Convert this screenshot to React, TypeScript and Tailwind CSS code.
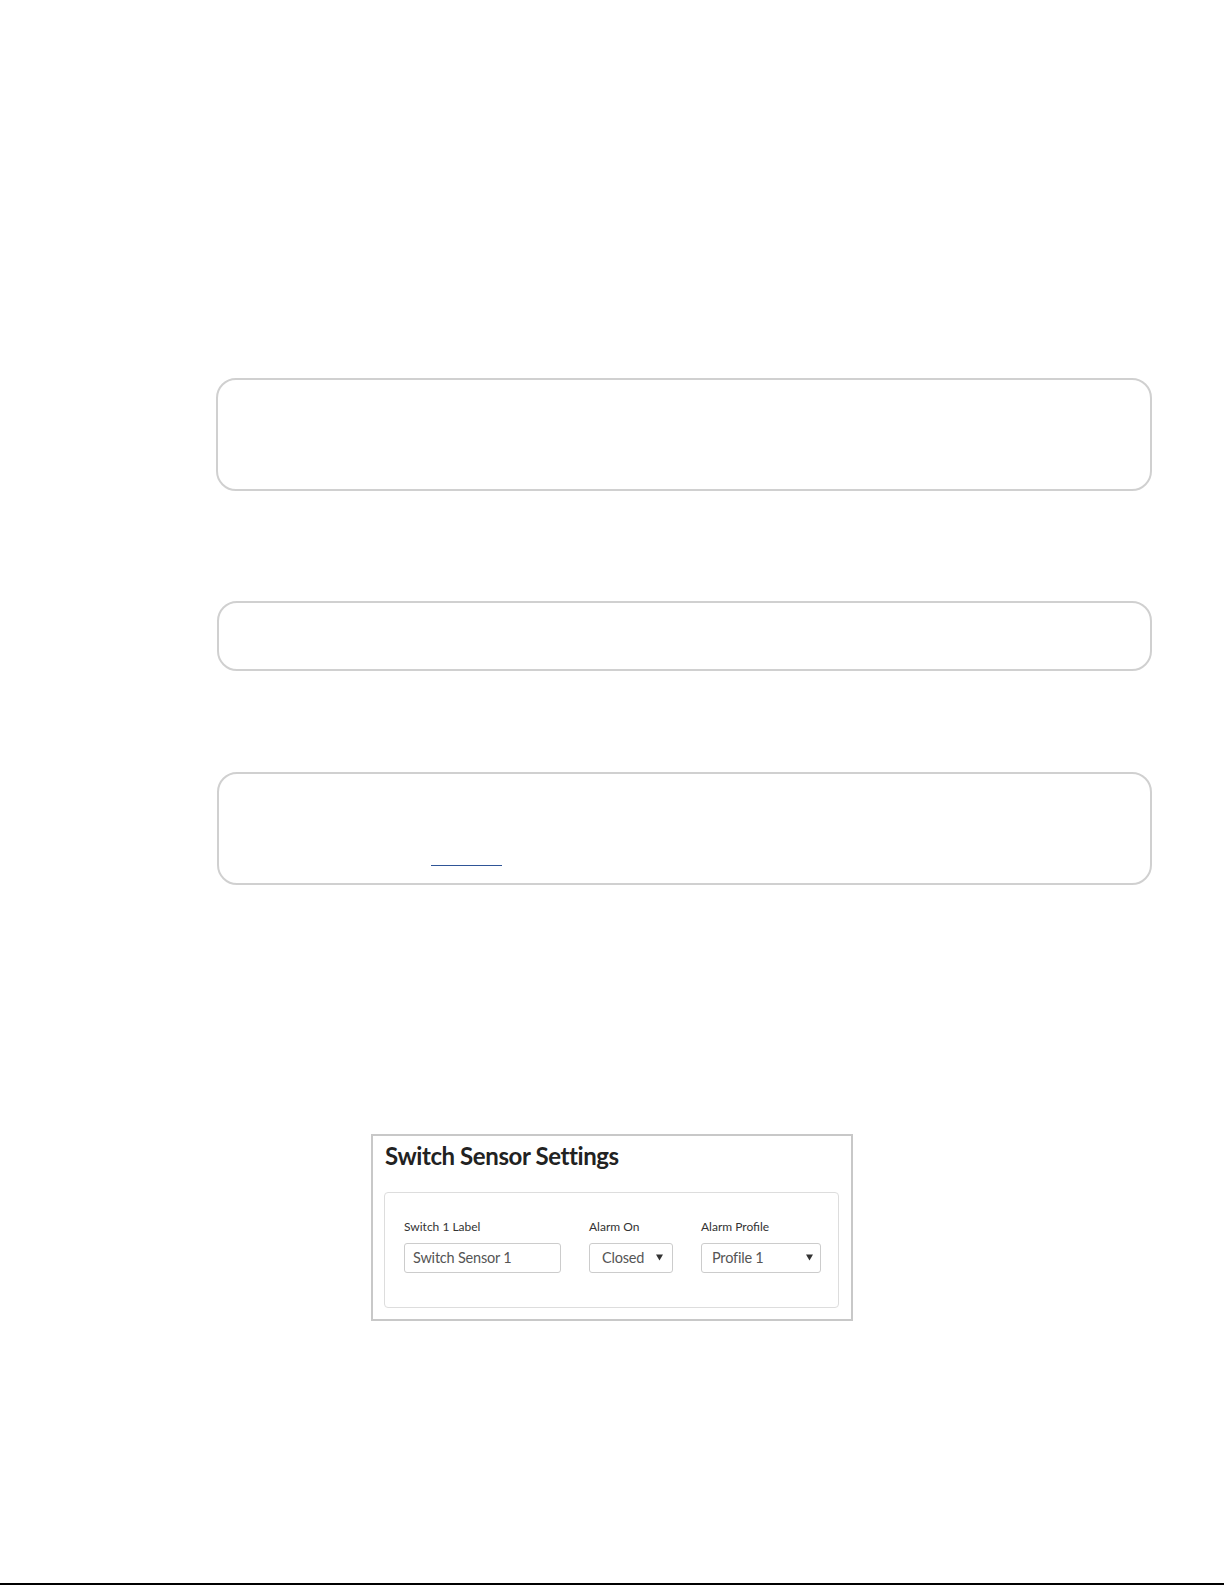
import React from "react";

function Field({
  label,
  width,
  text,
  textPad,
  select,
  arrowRight,
}: {
  label: string;
  width: string;
  text: string;
  textPad: string;
  select?: boolean;
  arrowRight?: string;
}) {
  return (
    <div className="flex flex-col">
      <div className="h-[16px] mb-[8px] text-[12px] leading-[16px] text-[#333333]">{label}</div>
      <div
        className={`relative h-[30px] ${width} border border-[#cccccc] rounded-[3px] bg-white flex items-center`}
      >
        <span className={`${textPad} text-[14.5px] leading-[20px] tracking-[-0.2px] text-[#555555]`}>
          {text}
        </span>
        {select && (
          <svg
            className={`absolute ${arrowRight} top-[10px]`}
            width="7"
            height="7"
            viewBox="0 0 7 7"
          >
            <path d="M0 0.5 H7 L3.5 6.5 Z" fill="#333333" />
          </svg>
        )}
      </div>
    </div>
  );
}

export default function App() {
  return (
    <div
      className="w-[1225px] h-[1585px] bg-white flex flex-col"
      style={{ fontFamily: 'Lato, "Noto Sans", Arial, sans-serif' }}
    >
      <div className="pt-[378px] flex flex-col">
        <div className="ml-[216px] w-[936px] h-[113px] border-2 border-[#d0d0d0] rounded-[20px]" />
        <div className="mt-[110px] ml-[217px] w-[935px] h-[70px] border-2 border-[#d0d0d0] rounded-[20px]" />
        <div className="mt-[101px] ml-[217px] w-[935px] h-[113px] border-2 border-[#d0d0d0] rounded-[20px] pl-[212px] pt-[90px]">
          <div className="w-[71px] h-[2px] border-b border-[#2f5597]" />
        </div>

        <div className="mt-[249px] ml-[371px] w-[482px] h-[187px] border-2 border-[#c8c8c8] flex flex-col pl-[11px]">
          <div className="pt-[4px] pl-[1px] h-[36px] text-[24px] leading-[32px] font-bold tracking-[-0.4px] text-[#222222]">
            Switch Sensor Settings
          </div>
          <div className="mt-[20px] w-[455px] h-[116px] border border-[#dddddd] rounded-[4px] pt-[26px] pl-[19px] flex gap-[28px]">
            <Field label="Switch 1 Label" width="w-[157px]" text="Switch Sensor 1" textPad="pl-[8px]" />
            <Field
              label="Alarm On"
              width="w-[84px]"
              text="Closed"
              textPad="pl-[12px]"
              select
              arrowRight="right-[9px]"
            />
            <Field
              label="Alarm Profile"
              width="w-[120px]"
              text="Profile 1"
              textPad="pl-[10px]"
              select
              arrowRight="right-[7px]"
            />
          </div>
        </div>
      </div>
      <div className="mt-auto h-[2px] bg-black w-[1224px]" />
    </div>
  );
}
